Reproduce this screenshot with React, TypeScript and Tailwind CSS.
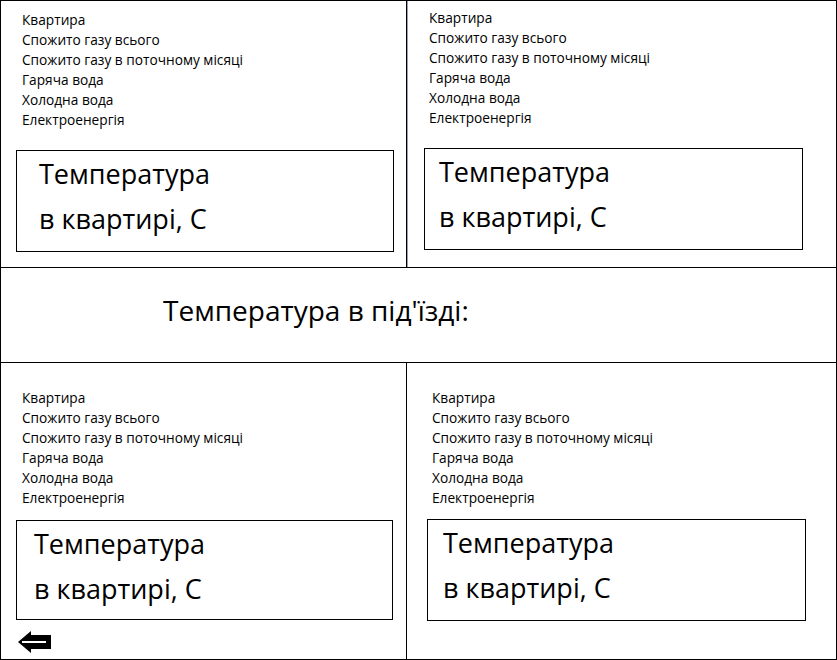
import React from "react"

const rows = [
  "Квартира",
  "Спожито газу всього",
  "Спожито газу в поточному місяці",
  "Гаряча вода",
  "Холодна вода",
  "Електроенергія",
]

type CellProps = {
  pad: string
  box: string
  inner: string
  children?: React.ReactNode
}

function Cell({ pad, box, inner, children }: CellProps) {
  return (
    <div className={"flex flex-col " + pad}>
      <ul className="text-[13.7px] leading-[20px] text-black">
        {rows.map((r) => (
          <li key={r}>{r}</li>
        ))}
      </ul>
      <div className={"border border-black " + box}>
        <div className={"text-[27px] leading-[45px] text-black " + inner}>
          <p>Температура</p>
          <p>в квартирі, С</p>
        </div>
      </div>
      {children}
    </div>
  )
}

export default function App() {
  return (
    <div
      className="w-[837px] h-[660px] bg-white border border-black flex flex-col"
      style={{ fontFamily: '"Open Sans", "Noto Sans", sans-serif' }}
    >
      {/* TOP */}
      <div className="grid grid-cols-[406px_1fr] h-[266px]">
        <div className="border-r border-black">
          <Cell pad="pl-[21px] pt-[9px]" box="mt-[20px] -ml-[6px] w-[378px] h-[102px]" inner="pl-[22px]" />
        </div>
        <div className="border-l border-gray-400">
          <Cell pad="pl-[21px] pt-[7px]" box="mt-[20px] -ml-[5px] w-[379px] h-[102px]" inner="pl-[14px]" />
        </div>
      </div>

      {/* MIDDLE */}
      <div className="h-[96px] border-y border-black flex items-center pl-[162px] pb-[10px]">
        <p className="text-[28px] text-black">Температура в під'їзді:</p>
      </div>

      {/* BOTTOM */}
      <div className="grid grid-cols-[406px_1fr] flex-1">
        <div className="border-r border-black">
          <Cell pad="pl-[21px] pt-[25px]" box="mt-[12px] w-[377px] h-[100px] -ml-[6px]" inner="pl-[17px]">
            <svg className="mt-[11px] -ml-[4px]" width="33" height="22" viewBox="0 0 33 22">
              <polygon points="0,11 13,0 13,4 33,4 33,18 13,18 13,22" fill="black" />
              <rect x="4" y="10" width="24" height="2" fill="white" />
            </svg>
          </Cell>
        </div>
        <div>
          <Cell pad="pl-[25px] pt-[25px]" box="mt-[11px] w-[379px] h-[102px] -ml-[5px]" inner="pl-[15px]" />
        </div>
      </div>
    </div>
  )
}
